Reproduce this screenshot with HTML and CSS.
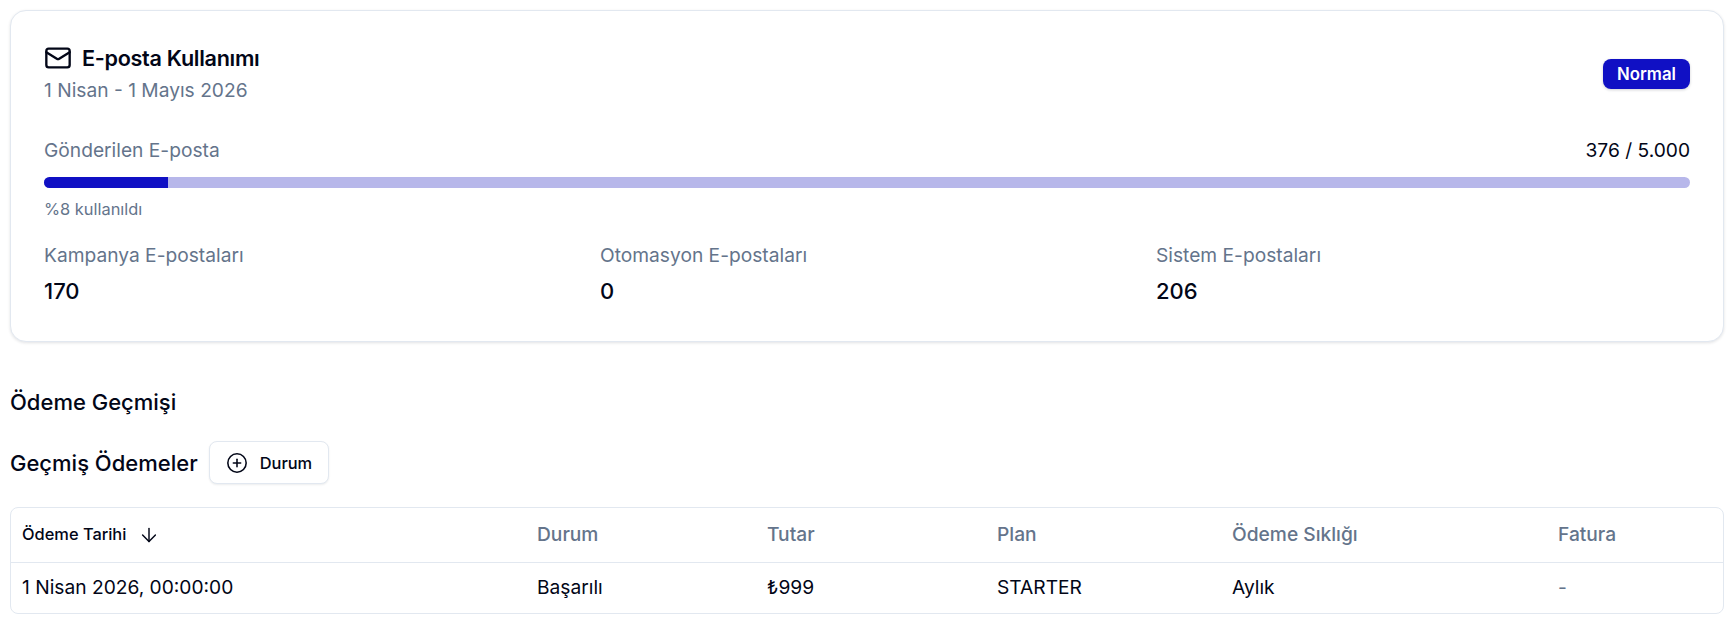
FILE: index.html
```html
<!DOCTYPE html>
<html lang="tr">
<head>
    <meta charset="UTF-8">
    <meta name="viewport" content="width=device-width, initial-scale=1.0">
    <title>Abonelik</title>
    <link rel="stylesheet" href="styles.css">
</head>
<body>
    <div class="container">
        <section class="usage-card">
            <div class="usage-head">
                <div>
                    <h2 class="usage-title">
                        <svg class="icon-mail" viewBox="0 0 24 24" fill="none" stroke="currentColor" stroke-width="2" stroke-linecap="round" stroke-linejoin="round">
                            <rect x="2" y="4" width="20" height="16" rx="2"></rect>
                            <path d="m22 7-8.97 5.7a1.94 1.94 0 0 1-2.06 0L2 7"></path>
                        </svg>
                        E-posta Kullanımı
                    </h2>
                    <p class="usage-period">1 Nisan - 1 Mayıs 2026</p>
                </div>
                <span class="badge">Normal</span>
            </div>

            <div class="usage-row">
                <span class="muted">Gönderilen E-posta</span>
                <span class="usage-count">376 / 5.000</span>
            </div>
            <div class="progress">
                <div class="progress-fill" style="width: 7.52%"></div>
            </div>
            <p class="progress-note">%8 kullanıldı</p>

            <div class="stats">
                <div>
                    <div class="muted">Kampanya E-postaları</div>
                    <div class="stat-value">170</div>
                </div>
                <div>
                    <div class="muted">Otomasyon E-postaları</div>
                    <div class="stat-value">0</div>
                </div>
                <div>
                    <div class="muted">Sistem E-postaları</div>
                    <div class="stat-value">206</div>
                </div>
            </div>
        </section>

        <h3 class="section-title">Ödeme Geçmişi</h3>

        <div class="toolbar">
            <h3 class="toolbar-title">Geçmiş Ödemeler</h3>
            <button type="button" class="filter-button">
                <svg class="icon-plus" viewBox="0 0 24 24" fill="none" stroke="currentColor" stroke-width="2" stroke-linecap="round" stroke-linejoin="round">
                    <circle cx="12" cy="12" r="10"></circle>
                    <path d="M8 12h8"></path>
                    <path d="M12 8v8"></path>
                </svg>
                Durum
            </button>
        </div>

        <div class="table-wrap">
            <table class="payments">
                <colgroup>
                    <col class="col-date">
                    <col class="col-status">
                    <col class="col-amount">
                    <col class="col-plan">
                    <col class="col-cycle">
                    <col>
                </colgroup>
                <thead>
                    <tr>
                        <th class="sort-head">
                            <span class="sort-label">
                                Ödeme Tarihi
                                <svg class="icon-arrow" viewBox="0 0 24 24" fill="none" stroke="currentColor" stroke-width="2" stroke-linecap="round" stroke-linejoin="round">
                                    <path d="M12 5v14"></path>
                                    <path d="m19 12-7 7-7-7"></path>
                                </svg>
                            </span>
                        </th>
                        <th>Durum</th>
                        <th>Tutar</th>
                        <th>Plan</th>
                        <th>Ödeme Sıklığı</th>
                        <th>Fatura</th>
                    </tr>
                </thead>
                <tbody>
                    <tr>
                        <td>1 Nisan 2026, 00:00:00</td>
                        <td>Başarılı</td>
                        <td>₺999</td>
                        <td>STARTER</td>
                        <td>Aylık</td>
                        <td class="muted">-</td>
                    </tr>
                </tbody>
            </table>
        </div>
    </div>
</body>
</html>
```

FILE: styles.css
```css
* {
    margin: 0;
    padding: 0;
    box-sizing: border-box;
}

body {
    background: #fff;
    color: #020617;
    font-family: Inter, "Noto Sans", sans-serif;
    font-size: 19.2px;
    line-height: 28.8px;
}

.container {
    padding: 10px 6px 0 10px;
}

.usage-card {
    height: 332px;
    padding: 33px;
    background: #fff;
    border: 1px solid #e2e8f0;
    border-radius: 16px;
    box-shadow: 0 1px 3px rgba(15, 23, 42, 0.12);
}

.usage-head {
    display: flex;
    justify-content: space-between;
    align-items: center;
}

.usage-title {
    display: flex;
    align-items: center;
    gap: 10px;
    font-size: 21.6px;
    line-height: 28px;
    font-weight: 600;
    letter-spacing: -0.3px;
}

.icon-mail {
    width: 28px;
    height: 28px;
}

.usage-period {
    margin-top: 4px;
    color: #64748b;
}

.badge {
    width: 87px;
    height: 30px;
    border-radius: 8px;
    background: #1010c4;
    color: #fff;
    font-size: 16.8px;
    line-height: 30px;
    font-weight: 600;
    text-align: center;
    box-shadow: 0 1px 3px rgba(15, 23, 42, 0.2);
}

.muted {
    color: #64748b;
}

.usage-row {
    display: flex;
    justify-content: space-between;
    margin-top: 31px;
}

.progress {
    height: 11px;
    margin-top: 12px;
    background: #b7b7ea;
    border-radius: 6px;
    overflow: hidden;
}

.progress-fill {
    height: 100%;
    background: #1010c4;
}

.progress-note {
    margin-top: 9px;
    color: #64748b;
    font-size: 16.4px;
    line-height: 24px;
}

.stats {
    display: grid;
    grid-template-columns: repeat(3, 1fr);
    gap: 22px;
    margin-top: 20px;
}

.stat-value {
    margin-top: 8px;
    font-size: 22px;
    line-height: 28px;
    font-weight: 450;
}

.section-title {
    margin-top: 45px;
    font-size: 22px;
    line-height: 30px;
    font-weight: 450;
}

.toolbar {
    display: flex;
    align-items: center;
    gap: 11px;
    margin-top: 24px;
}

.toolbar-title {
    font-size: 22px;
    line-height: 30px;
    font-weight: 450;
}

.filter-button {
    display: flex;
    align-items: center;
    gap: 12px;
    width: 120px;
    height: 43px;
    padding-left: 16px;
    background: #fff;
    border: 1px solid #e2e8f0;
    border-radius: 8px;
    box-shadow: 0 1px 2px rgba(15, 23, 42, 0.08);
    color: #020617;
    font-family: inherit;
    font-size: 16.4px;
    font-weight: 450;
}

.icon-plus {
    width: 22px;
    height: 22px;
    stroke-width: 1.7;
}

.table-wrap {
    margin-top: 23px;
    border: 1px solid #e2e8f0;
    border-radius: 8px;
    overflow: hidden;
}

.payments {
    width: 100%;
    table-layout: fixed;
    border-collapse: collapse;
}

.col-date { width: 515px; }
.col-status { width: 230px; }
.col-amount { width: 230px; }
.col-plan { width: 235px; }
.col-cycle { width: 326px; }

.payments th {
    height: 54px;
    padding: 0 11px;
    border-bottom: 1px solid #e2e8f0;
    color: #64748b;
    font-weight: 450;
    text-align: left;
}

.payments td {
    height: 51px;
    padding: 0 11px;
}

.payments th.sort-head {
    color: #020617;
    font-size: 16.4px;
}

.sort-label {
    display: flex;
    align-items: center;
    gap: 12px;
}

.icon-arrow {
    width: 22px;
    height: 22px;
    stroke-width: 1.6;
}
```
